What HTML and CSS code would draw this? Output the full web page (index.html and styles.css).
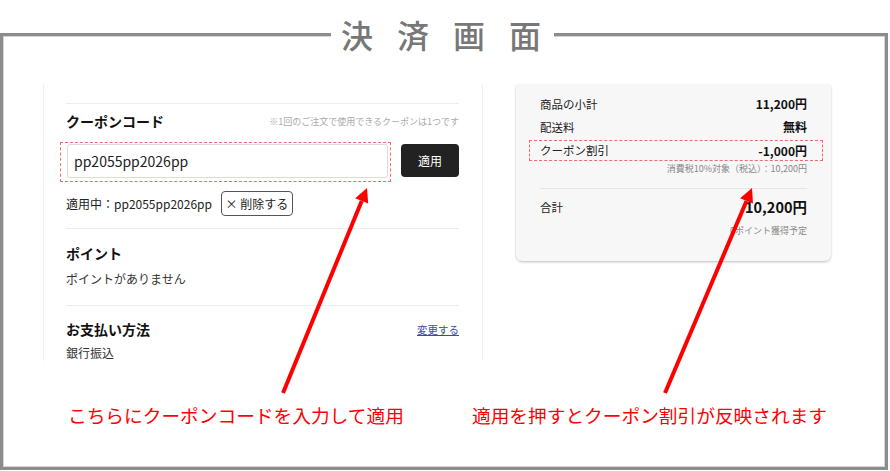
FILE: index.html
```html
<!DOCTYPE html>
<html lang="ja">
<head>
<meta charset="utf-8">
<title>決済画面</title>
<link rel="stylesheet" href="styles.css">
</head>
<body>
<div class="frame">
  <div class="title"><span>決</span><span>済</span><span>画</span><span>面</span></div>
  <div class="shot">
    <div class="panel">
      <section class="sec sec-coupon">
        <div class="sec-head">
          <h2>クーポンコード</h2>
          <span class="note">※1回のご注文で使用できるクーポンは1つです</span>
        </div>
        <div class="coupon-row">
          <div class="mark-input"><div class="input">pp2055pp2026pp</div></div>
          <button class="apply">適用</button>
        </div>
        <div class="applied">
          <span>適用中：pp2055pp2026pp</span>
          <button class="remove">× 削除する</button>
        </div>
      </section>
      <section class="sec sec-point">
        <h2>ポイント</h2>
        <p class="txt">ポイントがありません</p>
      </section>
      <section class="sec sec-pay">
        <div class="sec-head">
          <h2>お支払い方法</h2>
          <a class="link" href="#">変更する</a>
        </div>
        <p class="txt">銀行振込</p>
      </section>
    </div>
    <div class="card">
      <div class="row"><span class="lbl">商品の小計</span><span class="val">11,200円</span></div>
      <div class="row row2"><span class="lbl">配送料</span><span class="val">無料</span></div>
      <div class="row row-coupon"><span class="lbl">クーポン割引</span><span class="val">-1,000円</span></div>
      <div class="small">消費税10%対象（税込）：10,200円</div>
      <div class="total-sec">
        <div class="row total"><span class="lbl">合計</span><span class="val big">10,200円</span></div>
        <div class="small pts">0ポイント獲得予定</div>
      </div>
    </div>
  </div>
  <div class="captions">
    <p>こちらにクーポンコードを入力して適用</p>
    <p>適用を押すとクーポン割引が反映されます</p>
  </div>
  <svg class="arrows" width="888" height="471" viewBox="0 0 888 471" aria-hidden="true">
    <line x1="283" y1="393" x2="361.7" y2="201" stroke="#ff0000" stroke-width="4"/>
    <polygon points="367,188 368.2,203.6 355.2,198.3" fill="#ff0000"/>
    <line x1="665" y1="393" x2="746.5" y2="201" stroke="#ff0000" stroke-width="4"/>
    <polygon points="752,188 753,203.6 740.1,198.2" fill="#ff0000"/>
  </svg>
</div>
</body>
</html>
```
FILE: styles.css
```css
* { box-sizing: border-box; }
html, body { margin: 0; padding: 0; background: #fff; }
body {
  width: 890px;
  height: 471px;
  overflow: hidden;
  font-family: "Noto Sans CJK JP", "Noto Sans", sans-serif;
  color: #222;
  position: relative;
}
.frame {
  position: relative;
  margin-top: 33px;
  width: 888px;
  height: 437px;
  border: 3px solid #8c8c8c;
  box-shadow: inset 0 0 0 1px #d4d4d4;
}
.title {
  position: absolute;
  top: -18px;
  left: 328px;
  display: flex;
  gap: 24px;
  padding: 0 13px 0 10px;
  background: #fff;
  font-size: 32px;
  line-height: 32px;
  color: #777;
  font-weight: 500;
}
.shot {
  display: flex;
  align-items: flex-start;
  gap: 33px;
  padding: 48px 0 0 40px;
  height: 323px;
}
.panel {
  width: 440px;
  height: 277px;
  overflow: hidden;
  border-left: 1px solid #f0f0f0;
  border-right: 1px solid #f0f0f0;
  padding: 19px 23px 0 22px;
}
.sec { border-top: 1px solid #ececec; }
.sec h2 {
  margin: 0;
  font-size: 14px;
  line-height: 20px;
  font-weight: 700;
  color: #111;
}
.sec-head {
  display: flex;
  justify-content: space-between;
  align-items: center;
}
.sec-coupon { padding: 6px 0 12px; }
.note { font-size: 9px; color: #aaa; line-height: 20px; padding-top: 2px; }
.coupon-row {
  display: flex;
  align-items: flex-start;
  margin-top: 10px;
}
.mark-input {
  margin-left: -6px;
  border: 1px dashed #f26a6a;
  padding: 1px 2px 3px 6px;
}
.input {
  width: 321px;
  height: 34px;
  border: 1px solid #dcdcdc;
  border-radius: 3px;
  background: #fff;
  padding-left: 6px;
  font-size: 14px;
  line-height: 32px;
  color: #222;
}
.apply {
  margin-left: 10px;
  margin-top: 2px;
  width: 58px;
  height: 33px;
  border: 0;
  border-radius: 4px;
  background: #222;
  color: #fff;
  font-family: inherit;
  font-size: 12px;
  padding: 0;
}
.applied {
  display: flex;
  align-items: center;
  gap: 9px;
  margin-top: 9px;
  font-size: 12px;
  line-height: 25px;
}
.remove {
  width: 72px;
  height: 25px;
  border: 1px solid #555;
  border-radius: 4px;
  background: #fff;
  font-family: inherit;
  font-size: 12px;
  color: #222;
  padding: 0;
}
.sec-point { padding: 14px 0 17px; }
.txt {
  margin: 7px 0 0;
  font-size: 12px;
  line-height: 18px;
  color: #333;
}
.sec-pay { padding: 13px 0 0; }
.sec-pay .txt { margin-top: 5px; }
.link { font-size: 10.5px; color: #3b4aa8; text-decoration: underline; }
.card {
  width: 315px;
  height: 177px;
  background: #f7f7f7;
  border-radius: 0 0 6px 6px;
  box-shadow: 0 2px 3px -1px rgba(0,0,0,0.25), 1px 0 2px -1px rgba(0,0,0,0.15), -1px 0 2px -1px rgba(0,0,0,0.2);
  padding: 10px 24px 0 24px;
}
.row {
  display: flex;
  justify-content: space-between;
  align-items: center;
  line-height: 20px;
}
.row2 { margin-top: 3px; }
.lbl { font-size: 11.5px; color: #222; }
.val { font-size: 12px; font-weight: 700; color: #111; }
.row-coupon {
  margin: 3px -16px 0 -11px;
  padding: 0 15px 0 10px;
  border: 1px dashed #f26a6a;
  line-height: 19px;
}
.small {
  text-align: right;
  font-size: 9px;
  line-height: 14px;
  color: #888;
}
.row-coupon + .small { margin-top: 1px; }
.total-sec {
  margin-top: 12px;
  border-top: 1px solid #e6e6e6;
  padding-top: 7px;
}
.total { line-height: 22px; }
.big { font-size: 14.5px; }
.pts { margin-top: 6px; }
.captions {
  display: grid;
  grid-template-columns: 404px 1fr;
  padding-left: 65px;
  margin-top: 43px;
}
.captions p {
  margin: 0;
  font-size: 18.7px;
  line-height: 26px;
  color: #ff0000;
  white-space: nowrap;
}
.arrows {
  position: absolute;
  top: -36px;
  left: -3px;
}
```
